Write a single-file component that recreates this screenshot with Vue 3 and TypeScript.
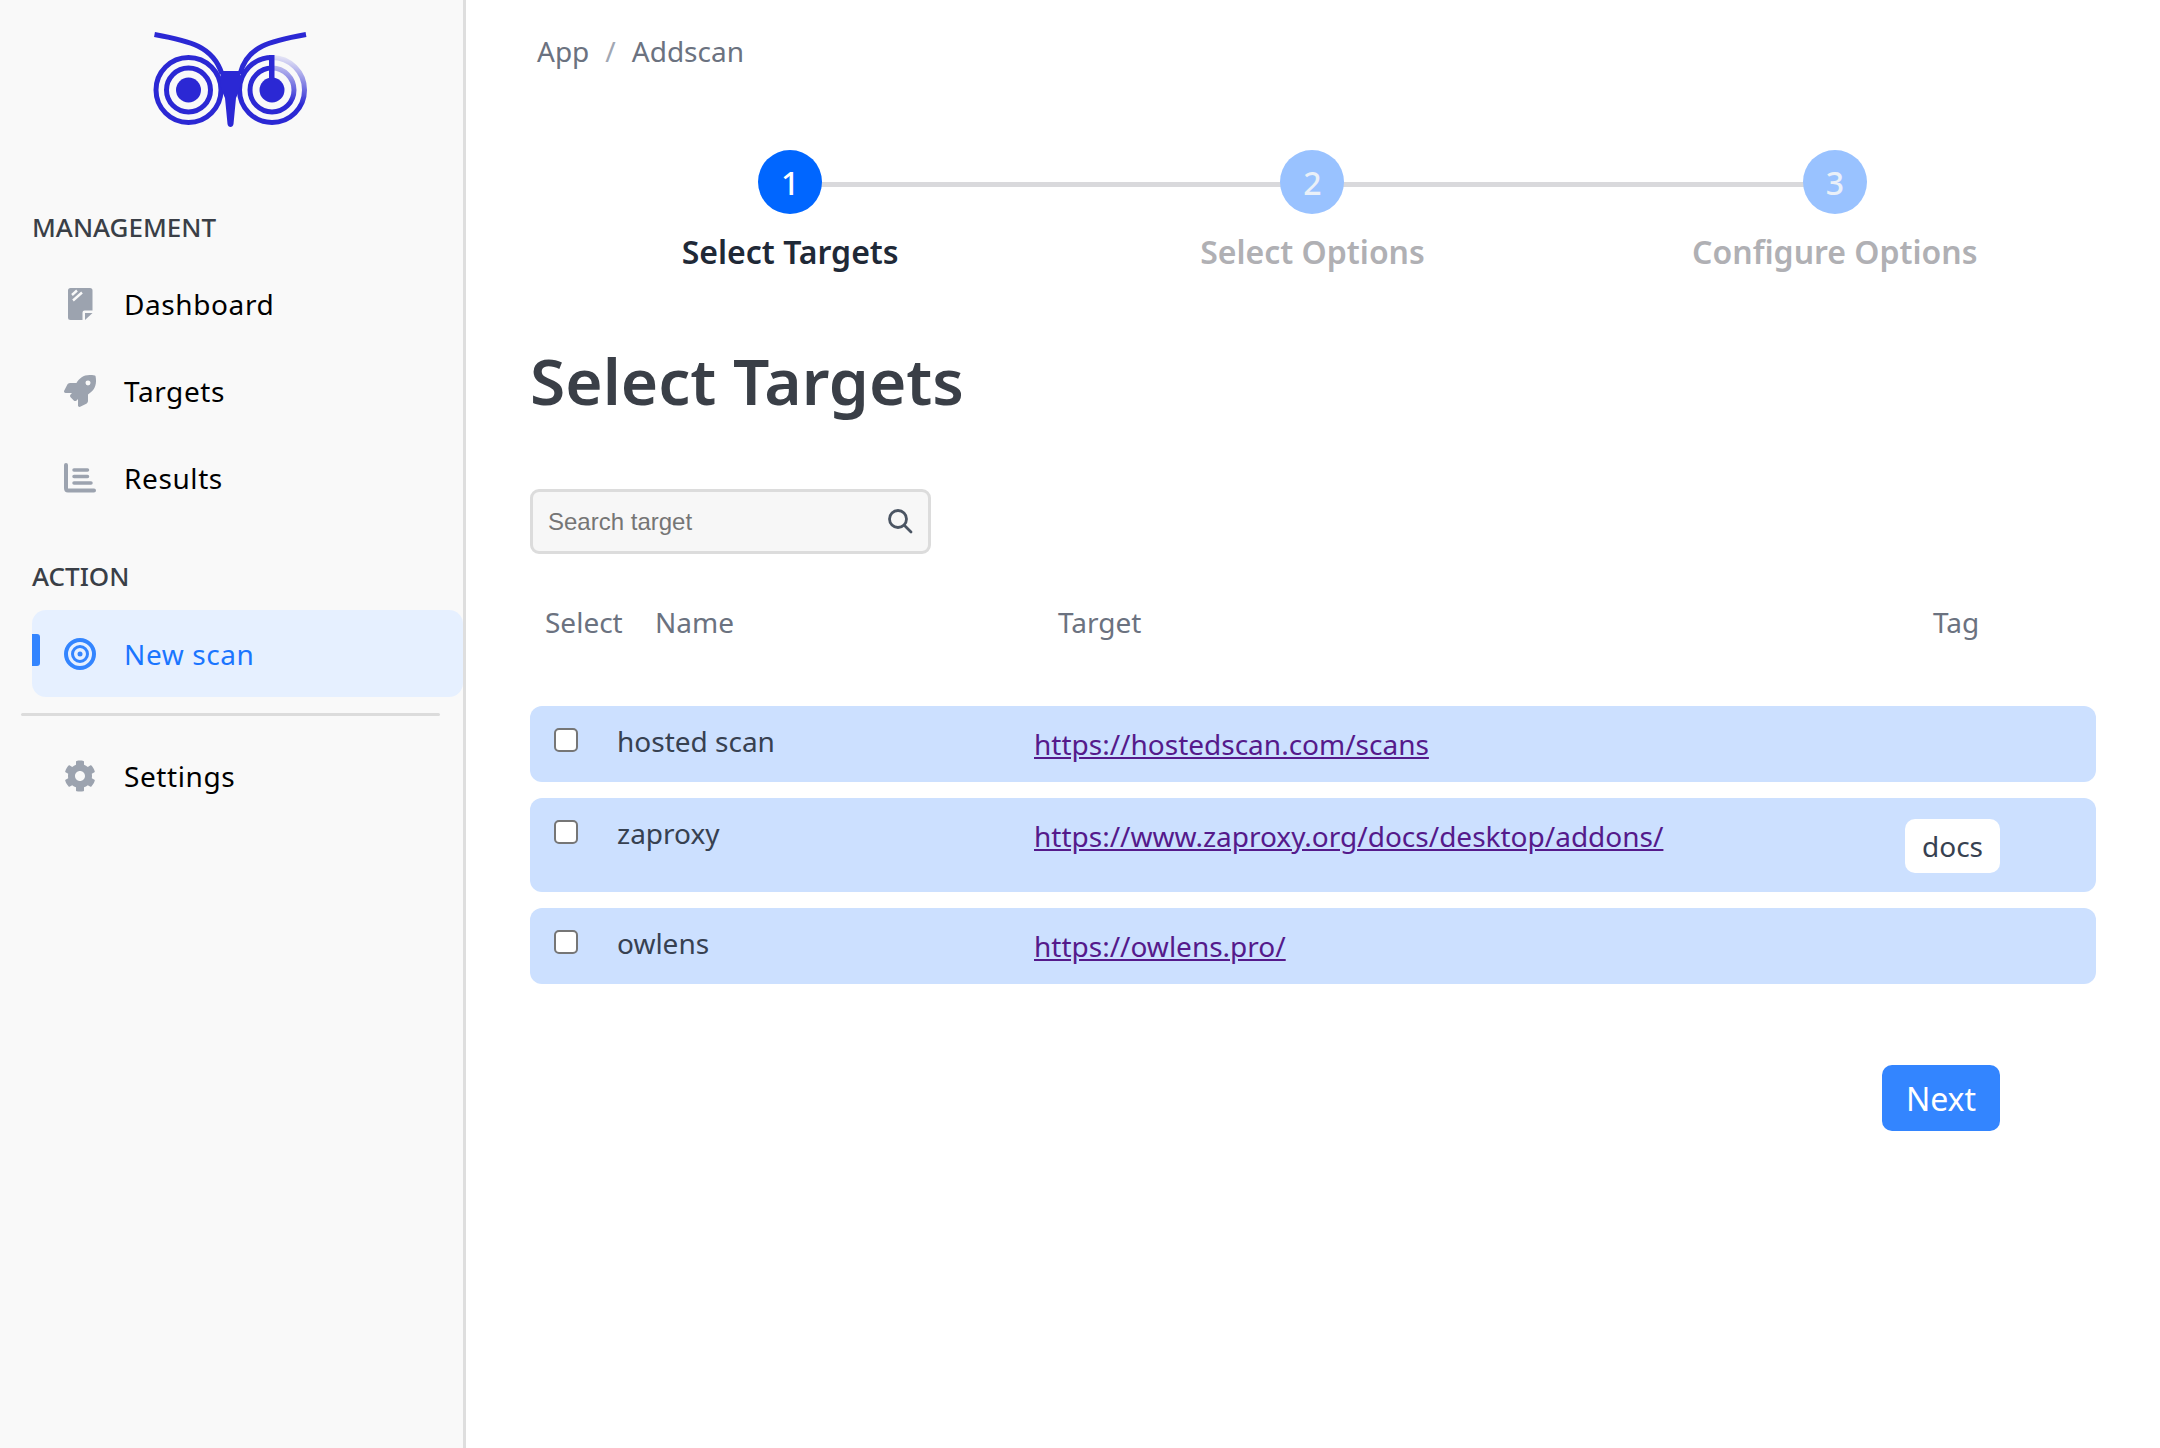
<script setup lang="ts">
const steps = [
  { n: 1, label: 'Select Targets', active: true },
  { n: 2, label: 'Select Options', active: false },
  { n: 3, label: 'Configure Options', active: false },
]
const rows = [
  { name: 'hosted scan', url: 'https://hostedscan.com/scans', tag: '' },
  { name: 'zaproxy', url: 'https://www.zaproxy.org/docs/desktop/addons/', tag: 'docs' },
  { name: 'owlens', url: 'https://owlens.pro/', tag: '' },
]
</script>

<template>
  <div class="layout">
    <aside class="sidebar">
      <div class="logo">
        <svg width="160" height="100" viewBox="150 30 160 100" fill="none">
          <defs>
            <linearGradient id="fade" gradientUnits="userSpaceOnUse" x1="272" y1="125" x2="285" y2="55">
              <stop offset="0" stop-color="#2b28d4" />
              <stop offset="0.35" stop-color="#2b28d4" />
              <stop offset="1" stop-color="#2b28d4" stop-opacity="0.06" />
            </linearGradient>
          </defs>
          <path d="M154.5 34.500C190 41 213 46 222 74" stroke="#2b28d4" stroke-width="5" />
          <path d="M306 34.500C270 41 247 46 240 74" stroke="#2b28d4" stroke-width="5" />
          <circle cx="188.500" cy="90" r="32.500" stroke="#2b28d4" stroke-width="5" />
          <circle cx="188.500" cy="90" r="22" stroke="#2b28d4" stroke-width="5" />
          <circle cx="188.500" cy="90" r="12.500" fill="#2b28d4" />
          <path d="M272 122.500A32.500 32.500 0 0 1 272 57.500" stroke="#2b28d4" stroke-width="5" />
          <path d="M272 57.500A32.500 32.500 0 0 1 272 122.500" stroke="url(#fade)" stroke-width="5" />
          <path d="M272 112A22 22 0 0 1 272 68" stroke="#2b28d4" stroke-width="5" />
          <path d="M272 68A22 22 0 0 1 272 112" stroke="url(#fade)" stroke-width="5" />
          <circle cx="272" cy="90" r="12.500" fill="#2b28d4" />
          <rect x="269" y="55" width="5.500" height="28" fill="#2b28d4" />
          <path d="M221 71H240L241 84C240 88 238 94 236 98L233.500 124C233 128 228 128 227.500 124L225 98C223 94 221 88 220 84Z" fill="#2b28d4" />
        </svg>
      </div>

      <div class="section-label first">MANAGEMENT</div>
      <a class="nav-item">
        <svg class="nav-icon" viewBox="0 0 32 32">
          <path d="M6.500 0H26A2.500 2.500 0 0 1 28.500 2.500V22.500H20.500A2 2 0 0 0 18.500 24.500V32H6.500A2.500 2.500 0 0 1 4 29.500V2.500A2.500 2.500 0 0 1 6.500 0Z" fill="#9ca3af" />
          <path d="M21 25H28.500L21 32Z" fill="#9ca3af" />
          <path d="M8 7L13 2.500M9 12.500L18 4.500" stroke="#f9f9f9" stroke-width="2.400" />
        </svg>
        <span>Dashboard</span>
      </a>
      <a class="nav-item">
        <svg class="nav-icon" viewBox="0 0 512 512">
          <path fill="#9ca3af" d="M505.12019,19.09375c-1.18945-5.53125-6.65819-11-12.207-12.1875C460.716,0,435.507,0,410.40747,0,307.17523,0,245.26909,55.20312,199.05238,128H94.83772c-16.34763.01562-35.55658,11.875-42.88664,26.48438L2.51562,253.29688A28.4,28.4,0,0,0,0,264a24.00867,24.00867,0,0,0,24.00582,24H127.81618l-22.47457,22.46875c-11.36521,11.36133-12.99607,32.25781,0,45.25L156.24582,406.625c11.15623,11.1875,32.15619,13.15625,45.27726,0l22.47457-22.46875V488a24.00867,24.00867,0,0,0,24.00581,24,28.55934,28.55934,0,0,0,10.707-2.51562l98.72834-49.39063c14.62888-7.29687,26.50776-26.5,26.50776-42.85937V312.79688c72.59753-46.3125,128.03493-108.40626,128.03493-211.09376C512.07526,76.5,512.07526,51.29688,505.12019,19.09375ZM384.04033,168A40,40,0,1,1,424.05,128,40.02322,40.02322,0,0,1,384.04033,168Z" />
        </svg>
        <span>Targets</span>
      </a>
      <a class="nav-item">
        <svg class="nav-icon" viewBox="0 0 32 32">
          <path d="M2 3V26C2 27.500 2.800 28.500 4 28.500H30" stroke="#9ca3af" stroke-width="4" fill="none" stroke-linecap="round" />
          <path d="M10 8H23.500M10 14.500H23.500M10 21H27" stroke="#9ca3af" stroke-width="3.500" fill="none" stroke-linecap="round" />
        </svg>
        <span>Results</span>
      </a>

      <div class="section-label second">ACTION</div>
      <a class="nav-item active">
        <span class="indicator"></span>
        <svg class="nav-icon" viewBox="0 0 32 32" fill="none">
          <circle cx="16" cy="16" r="14" stroke="#3385ff" stroke-width="4" />
          <circle cx="16" cy="16" r="7.500" stroke="#3385ff" stroke-width="3" />
          <circle cx="16" cy="16" r="2.500" fill="#3385ff" />
        </svg>
        <span>New scan</span>
      </a>
      <div class="side-divider"></div>
      <a class="nav-item">
        <svg class="nav-icon" viewBox="0 0 512 512">
          <path fill="#9ca3af" d="M487.4 315.7l-42.6-24.6c4.300-23.200 4.300-47 0-70.200l42.600-24.600c4.900-2.800 7.100-8.600 5.500-14-11.100-35.600-30-67.800-54.700-94.600-3.800-4.100-10-5.100-14.800-2.300L380.800 110c-17.900-15.400-38.500-27.300-60.800-35.100V25.800c0-5.600-3.900-10.500-9.400-11.700-36.700-8.200-74.300-7.800-109.200 0-5.500 1.200-9.400 6.100-9.400 11.700V75c-22.200 7.900-42.800 19.800-60.800 35.100L88.700 85.500c-4.900-2.800-11-1.900-14.800 2.300-24.700 26.700-43.600 58.900-54.700 94.600-1.700 5.400.6 11.200 5.500 14L67.300 221c-4.300 23.200-4.300 47 0 70.200l-42.600 24.600c-4.900 2.800-7.100 8.600-5.500 14 11.100 35.600 30 67.800 54.700 94.600 3.800 4.100 10 5.100 14.800 2.300l42.600-24.600c17.900 15.400 38.500 27.300 60.800 35.100v49.200c0 5.600 3.900 10.500 9.400 11.700 36.700 8.200 74.300 7.800 109.200 0 5.500-1.200 9.400-6.100 9.400-11.700v-49.200c22.200-7.900 42.800-19.800 60.800-35.100l42.600 24.600c4.900 2.800 11 1.900 14.800-2.300 24.700-26.700 43.600-58.900 54.700-94.600 1.500-5.500-.7-11.300-5.600-14.100zM256 336c-44.100 0-80-35.900-80-80s35.900-80 80-80 80 35.900 80 80-35.900 80-80 80z" />
        </svg>
        <span>Settings</span>
      </a>
    </aside>

    <main class="main">
      <nav class="crumbs">
        <span>App</span><span class="sep">/</span><span>Addscan</span>
      </nav>

      <div class="steps">
        <div v-for="(s, i) in steps" :key="s.n" class="step" :class="{ on: s.active, 'has-line': i < steps.length - 1 }">
          <div class="circle">{{ s.n }}</div>
          <div class="step-label">{{ s.label }}</div>
        </div>
      </div>

      <h1 class="title">Select Targets</h1>

      <div class="search">
        <input class="search-input" type="text" placeholder="Search target" />
        <svg class="search-icon" width="26" height="26" viewBox="0 0 26 26" fill="none">
          <circle cx="11" cy="11" r="8.500" stroke="#4b5563" stroke-width="2.800" />
          <path d="M17.500 17.500L24 24" stroke="#4b5563" stroke-width="2.800" stroke-linecap="round" />
        </svg>
      </div>

      <div class="thead">
        <span>Select</span><span>Name</span><span>Target</span><span>Tag</span>
      </div>

      <div class="rows">
        <div v-for="r in rows" :key="r.name" class="row">
          <input class="check" type="checkbox" />
          <span class="name">{{ r.name }}</span>
          <a class="url" :href="r.url">{{ r.url }}</a>
          <span v-if="r.tag" class="tag">{{ r.tag }}</span>
        </div>
      </div>

      <div class="actions">
        <button class="next" type="button">Next</button>
      </div>
    </main>
  </div>
</template>

<style>
html, body { margin: 0; background: #fff; }
</style>

<style scoped>
.layout {
  display: flex;
  min-height: 1448px;
  font-family: "Noto Sans", sans-serif;
  background: #fff;
}
.sidebar {
  width: 463px;
  flex: none;
  background: #f9f9f9;
  border-right: 3px solid #dedede;
}
.logo {
  display: flex;
  justify-content: center;
  height: 100px;
  padding: 30px 4px 0 0;
}
.logo svg { display: block; }
.section-label {
  margin-left: 32px;
  height: 40px;
  line-height: 40px;
  font-size: 26px;
  font-weight: 500;
  color: #3a3f47;
}
.section-label.first { margin-top: 77px; margin-bottom: 13px; }
.section-label.second { margin-top: 35px; margin-bottom: 14px; }
.nav-item {
  position: relative;
  display: flex;
  align-items: center;
  gap: 28px;
  height: 87px;
  margin-left: 32px;
  padding-left: 32px;
  border-radius: 14px;
  font-size: 28px;
  letter-spacing: 0.6px;
  color: #000;
}
.nav-item.active {
  background: #e6f0ff;
  color: #1a75ff;
}
.nav-icon { width: 32px; height: 32px; flex: none; }
.indicator {
  position: absolute;
  left: 0;
  top: 24px;
  width: 8px;
  height: 32px;
  background: #3385ff;
  border-radius: 0 3px 3px 0;
}
.side-divider {
  width: 419px;
  height: 3px;
  margin: 16px 0 16px 21px;
  background: #dcdcdc;
  border-radius: 2px;
}
.main {
  flex: 1;
  min-width: 0;
  padding: 0 64px;
}
.crumbs {
  display: flex;
  align-items: center;
  height: 40px;
  padding-top: 31px;
  padding-left: 7px;
  font-size: 28px;
  color: #6b7280;
}
.sep { margin: 0 16px; color: #a1a7b3; }
.steps {
  display: grid;
  grid-template-columns: repeat(3, 1fr);
  margin: 79px 0 0 -1px;
}
.step {
  position: relative;
  display: flex;
  flex-direction: column;
  align-items: center;
}
.step.has-line::after {
  content: "";
  position: absolute;
  left: 50%;
  width: 100%;
  top: 32px;
  height: 5px;
  background: #d9d9dc;
}
.circle {
  position: relative;
  z-index: 1;
  width: 64px;
  height: 64px;
  border-radius: 50%;
  display: flex;
  align-items: center;
  justify-content: center;
  background: #99c2ff;
  color: #eaf0f8;
  font-size: 32px;
  font-weight: 500;
}
.step.on .circle { background: #0066ff; color: #fff; }
.step-label {
  margin-top: 14px;
  height: 48px;
  line-height: 48px;
  font-size: 32px;
  font-weight: 600;
  color: #b0b0b4;
}
.step.on .step-label { color: #1f2937; }
.title {
  margin: 63px 0 0;
  height: 84px;
  line-height: 84px;
  font-size: 64px;
  font-weight: 600;
  color: #3a3f47;
}
.search {
  position: relative;
  box-sizing: border-box;
  width: 401px;
  height: 65px;
  margin-top: 66px;
  border: 3px solid #dcdcdc;
  border-radius: 9px;
  background: #f7f7f7;
}
.search-input {
  box-sizing: border-box;
  width: 100%;
  height: 100%;
  border: 0;
  outline: 0;
  background: transparent;
  padding: 0 50px 0 15px;
  font-family: "Liberation Sans", Arial, sans-serif;
  font-size: 24px;
  color: #374151;
}
.search-input::placeholder { color: #757575; opacity: 1; }
.search-icon { position: absolute; right: 15px; top: 16px; }
.thead {
  display: grid;
  grid-template-columns: 110px 403px 875px auto;
  margin-top: 46px;
  padding-left: 15px;
  height: 44px;
  line-height: 44px;
  font-size: 28px;
  color: #6b7280;
}
.rows {
  display: flex;
  flex-direction: column;
  gap: 16px;
  margin-top: 62px;
}
.row {
  display: grid;
  grid-template-columns: 87px 417px 871px auto;
  align-items: start;
  min-height: 76px;
  box-sizing: border-box;
  padding-top: 16px;
  background: #cce0ff;
  border-radius: 12px;
}
.check {
  appearance: none;
  box-sizing: border-box;
  width: 24px;
  height: 24px;
  margin: 6px 0 0 24px;
  background: #fff;
  border: 2px solid #767676;
  border-radius: 5px;
}
.name {
  line-height: 38px;
  font-size: 28px;
  color: #374151;
}
.url {
  line-height: 44px;
  font-size: 28px;
  color: #551a8b;
  white-space: nowrap;
}
.tag {
  justify-self: start;
  height: 54px;
  line-height: 54px;
  margin: 5px 0 19px;
  padding: 0 17px;
  background: #fff;
  border-radius: 10px;
  font-size: 28px;
  color: #374151;
}
.actions {
  display: flex;
  justify-content: flex-end;
  margin-top: 81px;
  padding-right: 96px;
}
.next {
  width: 118px;
  height: 66px;
  border: 0;
  border-radius: 10px;
  background: #3385ff;
  color: #fff;
  font-family: "Noto Sans", sans-serif;
  font-size: 32px;
}
</style>
